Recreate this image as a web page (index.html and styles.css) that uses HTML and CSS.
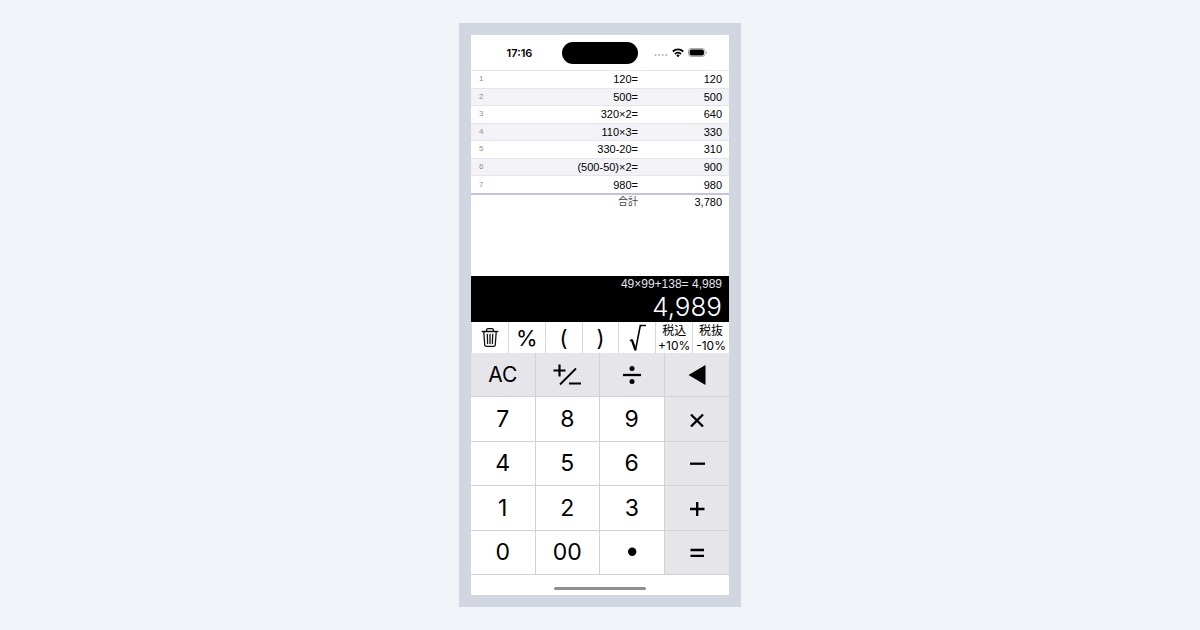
FILE: index.html
```html
<!DOCTYPE html>
<html lang="ja">
<head>
    <meta charset="UTF-8">
    <meta name="viewport" content="width=device-width, initial-scale=1.0">
    <title>電卓</title>
    <link rel="stylesheet" href="styles.css">
</head>
<body>
    <main class="phone">
        <header class="status-bar">
            <span class="time">17:16</span>
            <span class="island"></span>
            <span class="status-icons">
                <svg width="14" height="4" viewBox="0 0 14 4" fill="#b8b8bc">
                    <circle cx="1.5" cy="2" r="1.1"/><circle cx="5.1" cy="2" r="1.1"/><circle cx="8.7" cy="2" r="1.1"/><circle cx="12.3" cy="2" r="1.1"/>
                </svg>
                <svg width="12" height="10" viewBox="0 0 12 10" fill="none" stroke="#000" stroke-width="1.8">
                    <path d="M.8 3.5a7.4 7.4 0 0 1 10.4 0M2.9 6a4.4 4.4 0 0 1 6.2 0"/>
                    <path d="M4.3 7.4a2.5 2.5 0 0 1 3.4 0L6 9.2z" fill="#000" stroke="none"/>
                </svg>
                <svg width="19" height="10" viewBox="0 0 19 10">
                    <rect x=".5" y=".5" width="16.5" height="8" rx="2.6" fill="#fff" stroke="#a9a9ad"/>
                    <rect x="1.6" y="1.6" width="14.3" height="5.8" rx="1.6"/>
                    <path d="M18 3v3q1-.5 1-1.5T18 3z" fill="#a9a9ad"/>
                </svg>
            </span>
        </header>

        <section class="history">
            <table>
                <tbody>
                    <tr><th scope="row">1</th><td>120=</td><td>120</td></tr>
                    <tr><th scope="row">2</th><td>500=</td><td>500</td></tr>
                    <tr><th scope="row">3</th><td>320×2=</td><td>640</td></tr>
                    <tr><th scope="row">4</th><td>110×3=</td><td>330</td></tr>
                    <tr><th scope="row">5</th><td>330-20=</td><td>310</td></tr>
                    <tr><th scope="row">6</th><td>(500-50)×2=</td><td>900</td></tr>
                    <tr><th scope="row">7</th><td>980=</td><td>980</td></tr>
                </tbody>
                <tfoot>
                    <tr><td></td><td class="total-label">合計</td><td>3,780</td></tr>
                </tfoot>
            </table>
        </section>

        <section class="display">
            <div class="formula">49×99+138= 4,989</div>
            <div class="result">4,989</div>
        </section>

        <div class="functions">
            <button type="button" aria-label="削除">
                <svg width="18" height="22" viewBox="0 0 18 22" fill="none" stroke="#111" stroke-width="1.3" stroke-linecap="round" stroke-linejoin="round">
                    <path d="M1.2 4.5h15.6M5.6 4.3V3q0-1.4 1.4-1.4h4q1.4 0 1.4 1.4v1.3M2.8 4.7l.9 13q.1 1.6 1.7 1.6h7.2q1.6 0 1.7-1.6l.9-13M6.3 7.3l.3 9.3M9 7.3v9.3M11.7 7.3l-.3 9.3"/>
                </svg>
            </button>
            <button type="button">%</button>
            <button type="button">(</button>
            <button type="button">)</button>
            <button type="button" aria-label="平方根">
                <svg width="18" height="28" viewBox="0 0 18 28" fill="none" stroke="#000">
                    <path d="M2 16.8l2-1.2" stroke-width="1.4"/>
                    <path d="M3.8 15.6l3.6 10.2" stroke-width="2.3"/>
                    <path d="M7.4 26.6L12.3 1.5H18" stroke-width="1.6"/>
                </svg>
            </button>
            <button type="button" class="tax">税込<br>+10%</button>
            <button type="button" class="tax">税抜<br>-10%</button>
        </div>

        <div class="keypad">
            <button type="button" class="gray clear">AC</button>
            <button type="button" class="gray" aria-label="符号切替">
                <svg width="28" height="22" viewBox="0 0 28 22" fill="none" stroke="#000" stroke-width="2.2">
                    <path d="M.5 6.5h12M6.5 .5v12M16 19.5h12"/><path d="M7 20.5L23 4.5" stroke-width="1.8"/>
                </svg>
            </button>
            <button type="button" class="gray" aria-label="割る">
                <svg width="18" height="18" viewBox="0 0 18 18">
                    <path d="M0 9h18" stroke="#000" stroke-width="2.3"/><circle cx="9" cy="2.5" r="2.5"/><circle cx="9" cy="15.5" r="2.5"/>
                </svg>
            </button>
            <button type="button" class="gray" aria-label="一文字消す">
                <svg width="18" height="20" viewBox="0 0 18 20"><path d="M.5 10L17.5 0v20z"/></svg>
            </button>

            <button type="button">7</button>
            <button type="button">8</button>
            <button type="button">9</button>
            <button type="button" class="gray" aria-label="掛ける">
                <svg width="16" height="16" viewBox="0 0 16 16" stroke="#000" stroke-width="2.3"><path d="M2 3.5l12 12M14 3.5L2 15.5"/></svg>
            </button>

            <button type="button">4</button>
            <button type="button">5</button>
            <button type="button">6</button>
            <button type="button" class="gray" aria-label="引く">
                <svg width="16" height="16" viewBox="0 0 16 16" stroke="#000" stroke-width="2.3"><path d="M1 8.7h15"/></svg>
            </button>

            <button type="button">1</button>
            <button type="button">2</button>
            <button type="button">3</button>
            <button type="button" class="gray" aria-label="足す">
                <svg width="16" height="16" viewBox="0 0 16 16" stroke="#000" stroke-width="2.3"><path d="M1 9h14.5M8.2 2v14"/></svg>
            </button>

            <button type="button">0</button>
            <button type="button">00</button>
            <button type="button" aria-label="小数点">
                <svg width="10" height="10" viewBox="0 0 10 10"><circle cx="5.2" cy="4.7" r="4.2"/></svg>
            </button>
            <button type="button" class="gray" aria-label="イコール">
                <svg width="16" height="16" viewBox="0 0 16 16" stroke="#000" stroke-width="2.3"><path d="M1.5 6h13.5M1.5 11.8h13.5"/></svg>
            </button>
        </div>

        <footer class="home-bar"><span></span></footer>
    </main>
</body>
</html>
```
FILE: styles.css
```css
* {
    box-sizing: border-box;
}
body {
    margin: 0;
    padding: 23px 0;
    min-height: 100vh;
    display: flex;
    justify-content: center;
    background-color: #f1f3f8;
    color: #000;
    font-family: Inter, "Noto Sans CJK JP", sans-serif;
}
.phone {
    width: 100%;
    max-width: 282px;
    border: 12px solid #d1d6e0;
    background-color: #fff;
    display: flex;
    flex-direction: column;
}
.status-bar {
    display: grid;
    grid-template-columns: 1fr 76px 1fr;
    align-items: center;
    height: 35px;
}
.time {
    padding-left: 6px;
    font-size: 11px;
    font-weight: 600;
    text-align: center;
}
.island {
    height: 22px;
    border-radius: 11px;
    background-color: #000;
}
.status-icons {
    display: flex;
    align-items: center;
    justify-content: flex-end;
    gap: 4px;
    padding-right: 22px;
}
.status-icons svg:first-child {
    margin-top: 5px;
}

/* 計算履歴 */
.history {
    flex: 1;
    font-family: "Liberation Sans", "Noto Sans CJK JP", sans-serif;
    font-size: 11px;
    line-height: 14px;
}
table {
    width: 100%;
    height: 139px;
    border-collapse: collapse;
    table-layout: fixed;
}
tbody {
    border-bottom: 2px solid #c5c0e6;
}
tbody tr {
    border-top: 1px solid #e6e6ea;
}
tbody tr:nth-child(even) {
    background-color: #f2f2f7;
}
th,
td {
    padding: 0;
    text-align: right;
}
th {
    width: 36px;
    padding-left: 8px;
    color: #8e8e93;
    font-size: 8px;
    font-weight: normal;
    text-align: left;
}
td:nth-child(3) {
    width: 91px;
    padding-right: 7px;
}
tfoot td {
    vertical-align: top;
}
.total-label {
    color: #444;
    font-size: 10px;
}

.display {
    padding: 0 7px;
    background-color: #000;
    color: #fff;
    text-align: right;
}
.formula {
    color: #e5e5ea;
    font-family: "Liberation Sans", sans-serif;
    font-size: 12px;
    line-height: 16px;
}
.result {
    font-size: 26px;
    font-weight: 300;
    line-height: 30px;
}

button {
    display: flex;
    align-items: center;
    justify-content: center;
    min-width: 0;
    margin: 0;
    padding: 0;
    border: 0;
    background-color: #fff;
    color: #000;
    font-family: inherit;
    font-size: 23px;
    cursor: pointer;
}
.functions {
    display: grid;
    grid-template-columns: repeat(7, 1fr);
    height: 31px;
}
.functions button {
    border-left: 1px solid #d8d8dc;
    font-size: 22px;
}
.functions .tax {
    font-size: 12px;
    line-height: 15px;
}
.keypad {
    display: grid;
    grid-template-columns: repeat(4, 1fr);
    grid-template-rows: repeat(5, 1fr);
    min-height: 222px;
}
.keypad button {
    border-right: 1px solid #d1d1d6;
    border-bottom: 1px solid #d1d1d6;
}
.keypad button:nth-child(4n) {
    border-right: 0;
}
.keypad .gray {
    background-color: #e5e5ea;
}
.keypad .clear {
    font-size: 21px;
}
.home-bar {
    display: flex;
    justify-content: center;
    padding: 12px 0 5px;
}
.home-bar span {
    width: 92px;
    height: 3px;
    border-radius: 2px;
    background-color: #8e8e8e;
}
```
